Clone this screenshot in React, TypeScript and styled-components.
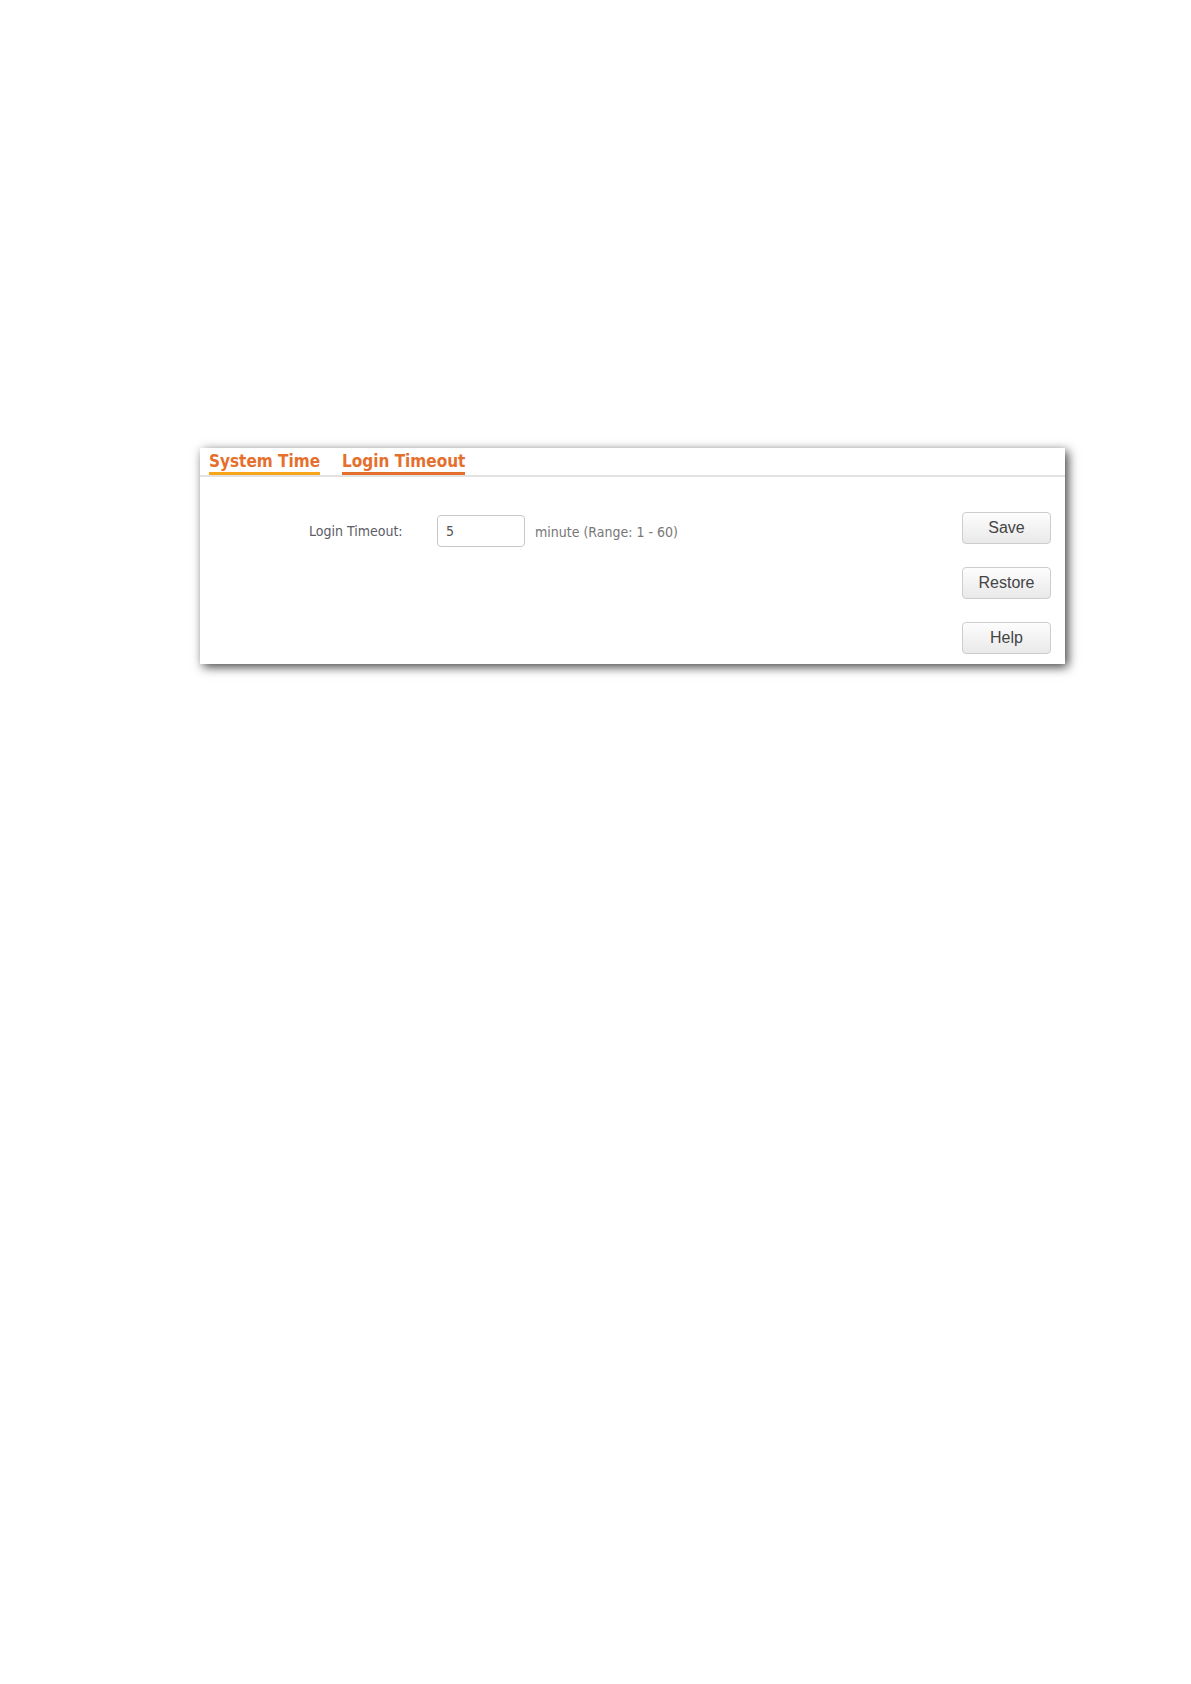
import React, { useState } from 'react';
import styled, { createGlobalStyle } from 'styled-components';

const GlobalStyle = createGlobalStyle`
  * {
    box-sizing: border-box;
  }

  body {
    margin: 0;
    background: #fff;
    font-family: 'DejaVu Sans Condensed', 'Noto Sans', sans-serif;
  }
`;

const Page = styled.main`
  min-height: 100vh;
  padding: 448px 126px 40px 200px;
`;

const Panel = styled.section`
  background: #fff;
  box-shadow: 3px 3px 10px rgba(0, 0, 0, 0.75);
`;

const TabBar = styled.nav`
  display: flex;
  gap: 22px;
  height: 29px;
  padding: 3px 9px 0;
  border-bottom: 2px solid #e2e2e2;
`;

const Tab = styled.a<{ $line: string }>`
  height: 24px;
  border-bottom: 3px solid ${props => props.$line};
  color: #e5702e;
  font-size: 17px;
  font-weight: 700;
  line-height: 21px;
  text-decoration: none;
  white-space: nowrap;
`;

const Content = styled.form`
  display: flex;
  justify-content: space-between;
  padding: 35px 14px 10px 109px;
`;

const Field = styled.div`
  display: flex;
  align-items: center;
  height: 32px;
  margin-top: 3px;
`;

const Label = styled.label`
  width: 128px;
  color: #5c5c66;
  font-size: 14px;
  line-height: 20px;
`;

const TextInput = styled.input`
  width: 88px;
  height: 32px;
  padding: 0 8px;
  border: 1px solid #c8c8c8;
  border-radius: 4px;
  background: #fff;
  color: #555;
  font-family: inherit;
  font-size: 14px;
  outline: none;
`;

const Hint = styled.span`
  margin-left: 10px;
  padding-top: 2px;
  color: #777;
  font-size: 14px;
  line-height: 20px;
`;

const Actions = styled.div`
  display: flex;
  flex-direction: column;
  gap: 23px;
`;

const Button = styled.button`
  width: 89px;
  height: 32px;
  padding: 0;
  border: 1px solid #cdcdcd;
  border-radius: 4px;
  background: linear-gradient(#fdfdfd, #e9e9e9);
  color: #444;
  font-family: 'Liberation Sans', Arial, sans-serif;
  font-size: 16px;
  cursor: pointer;
`;

const App: React.FC = () => {
  const [timeout, setTimeoutValue] = useState('5');

  const handleSubmit = (e: React.FormEvent) => {
    e.preventDefault();
  };

  return (
    <>
      <GlobalStyle />
      <Page>
        <Panel>
          <TabBar>
            <Tab href="#system-time" $line="#f9a51a">System Time</Tab>
            <Tab href="#login-timeout" $line="#e5702e" aria-current="page">Login Timeout</Tab>
          </TabBar>
          <Content onSubmit={handleSubmit}>
            <Field>
              <Label htmlFor="login-timeout">Login Timeout:</Label>
              <TextInput
                id="login-timeout"
                type="text"
                inputMode="numeric"
                aria-describedby="timeout-range"
                value={timeout}
                onChange={e => setTimeoutValue(e.target.value)}
              />
              <Hint id="timeout-range">minute (Range: 1 - 60)</Hint>
            </Field>
            <Actions>
              <Button type="submit">Save</Button>
              <Button type="button" onClick={() => setTimeoutValue('5')}>Restore</Button>
              <Button type="button">Help</Button>
            </Actions>
          </Content>
        </Panel>
      </Page>
    </>
  );
};

export default App;
